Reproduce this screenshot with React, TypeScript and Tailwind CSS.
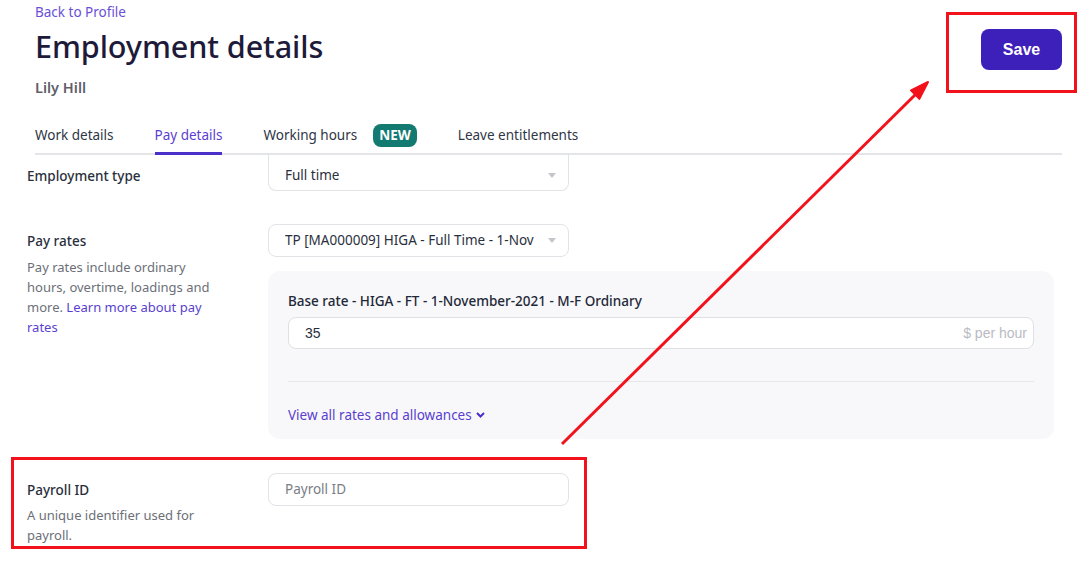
import React from 'react';

const font = { fontFamily: '"Noto Sans", "Open Sans", sans-serif' };

function Caret() {
  return (
    <svg width="8" height="5" viewBox="0 0 8 5" className="shrink-0">
      <path d="M0 0 L8 0 L4 5 Z" fill="#c4c6cc" />
    </svg>
  );
}

function Select({ value, className }: { value: string; className?: string }) {
  return (
    <div
      className={`flex w-[301px] items-center justify-between rounded-lg border border-[#e2e3e7] bg-white pl-4 pr-3 text-[13.5px] text-[#2a2f3c] ${className ?? ''}`}
    >
      <span className="truncate whitespace-nowrap">{value}</span>
      <span className="pl-3">
        <Caret />
      </span>
    </div>
  );
}

export default function App() {
  return (
    <div className="relative h-[562px] w-[1090px] overflow-hidden bg-white" style={font}>
      {/* Header */}
      <header className="flex items-start justify-between pl-[35px] pr-[28px]">
        <div>
          <a className="block pt-[3px] text-[13.5px] leading-[18px] text-[#6a50d8]">Back to Profile</a>
          <h1 className="mt-[5px] text-[30.6px] font-medium leading-[40px] tracking-[-0.1px] text-[#1d1a3a]">
            Employment details
          </h1>
          <div className="mt-[11px] text-[14.5px] font-semibold leading-[20px] text-[#5f6068]">Lily Hill</div>
        </div>
        <button className="mt-[29px] h-[41px] w-[81px] rounded-lg bg-[#3d1fb9] text-[16px] font-bold text-white" style={{ fontFamily: '"Liberation Sans", Arial, sans-serif' }}>
          Save
        </button>
      </header>

      {/* Tabs */}
      <nav className="ml-[35px] mr-[28px] mt-[27px] flex items-end gap-[41px] border-b-2 border-[#e3e5ea] text-[13.5px] text-[#2e3646]">
        <div className="pb-[8px]">Work details</div>
        <div className="-mb-[2px] border-b-[3px] border-[#4a2fc8] pb-[7px] text-[#5a3fd0]">Pay details</div>
        <div className="flex items-center gap-[16px] pb-[6px]">
          <span>Working hours</span>
          <span className="rounded-lg bg-[#137a72] px-[6px] py-[1px] text-[13.5px] font-bold leading-[21px] text-white">NEW</span>
        </div>
        <div className="pb-[8px]">Leave entitlements</div>
      </nav>

      {/* Form */}
      <main className="h-[408px] overflow-hidden pl-[27px]">
        {/* Employment type (scrolled, top edge hidden) */}
        <div className="flex items-start">
          <div className="w-[241px] pt-[11px] text-[13.5px] font-medium leading-[20px] text-[#2a2f3c]">Employment type</div>
          <Select value="Full time" className="h-[36px] rounded-t-none border-t-0 pt-[6px]" />
        </div>

        {/* Pay rates */}
        <div className="mt-[33px] flex items-start">
          <div className="w-[241px] pt-[7px]">
            <div className="text-[13.5px] font-medium leading-[20px] text-[#2a2f3c]">Pay rates</div>
            <p className="mt-[6px] w-[190px] text-[13px] leading-[20px] text-[#6c6f78]">
              Pay rates include ordinary hours, overtime, loadings and more.{' '}
              <a className="text-[#5a3fd0]">Learn more about pay rates</a>
            </p>
          </div>
          <div>
            <Select value="TP [MA000009] HIGA - Full Time - 1-Nov" className="h-[33px]" />
            <div className="mt-[14px] w-[786px] rounded-xl bg-[#f8f8fa] px-[20px] pb-[14px] pt-[20px]">
              <div className="text-[13.5px] font-medium leading-[20px] text-[#232838]">
                Base rate - HIGA - FT - 1-November-2021 - M-F Ordinary
              </div>
              <div className="mt-[6px] flex h-[32px] items-center justify-between rounded-lg border border-[#dfe0e4] bg-white pl-4 pr-[6px] text-[14px]" style={{ fontFamily: '"Liberation Sans", Arial, sans-serif' }}>
                <span className="text-[#2a2f3c]">35</span>
                <span className="text-[#b9bbc2]">$ per hour</span>
              </div>
              <div className="mt-[32px] border-t border-[#e6e7eb]" />
              <a className="mt-[23px] flex items-center gap-[4px] text-[13.5px] leading-[20px] text-[#5a3fd0]">
                View all rates and allowances
                <svg width="9" height="6" viewBox="0 0 9 6">
                  <path d="M1 1 L4.5 4.5 L8 1" fill="none" stroke="#4a2fc8" strokeWidth="2" />
                </svg>
              </a>
            </div>
          </div>
        </div>

        {/* Payroll ID */}
        <div className="mt-[34px] flex items-start">
          <div className="w-[241px] pt-[7px]">
            <div className="text-[13.5px] font-medium leading-[20px] text-[#2a2f3c]">Payroll ID</div>
            <p className="mt-[5px] w-[190px] text-[13px] leading-[20px] text-[#6c6f78]">
              A unique identifier used for payroll.
            </p>
          </div>
          <div className="flex h-[33px] w-[301px] items-center rounded-lg border border-[#e2e3e7] bg-white pl-4 text-[13.5px] text-[#7a7d86]">
            Payroll ID
          </div>
        </div>
      </main>

      {/* Annotations */}
      <div className="pointer-events-none absolute left-[946px] top-[12px] h-[81px] w-[131px] border-[3px] border-[#f2121c]" />
      <div className="pointer-events-none absolute left-[11px] top-[457px] h-[92px] w-[576px] border-[3px] border-[#f2121c]" />
      <svg className="pointer-events-none absolute left-0 top-0" width="1090" height="562">
        <line x1="562" y1="444" x2="917" y2="93" stroke="#f2121c" strokeWidth="3" />
        <polygon points="928,82 919.4,98.9 911,90.4" fill="#f2121c" stroke="#f2121c" strokeWidth="2" strokeLinejoin="round" />
      </svg>
    </div>
  );
}
